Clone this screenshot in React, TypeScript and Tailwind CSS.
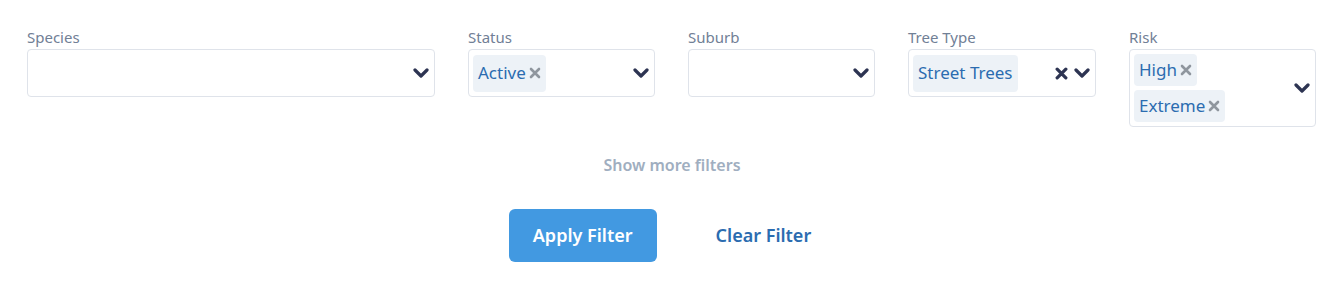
import React from "react";

const Chevron = () => (
  <svg width="16" height="12" viewBox="0 0 16 12" className="shrink-0">
    <polyline points="2,3 8,9 14,3" fill="none" stroke="#2d3452" strokeWidth="3.2" strokeLinecap="round" strokeLinejoin="round" />
  </svg>
);

const XIcon = ({ color = "#8f969e", size = 12, sw = 2.6 }: { color?: string; size?: number; sw?: number }) => (
  <svg width={size} height={size} viewBox="0 0 12 12" className="shrink-0">
    <path d="M2 2 L10 10 M10 2 L2 10" stroke={color} strokeWidth={sw} strokeLinecap="round" />
  </svg>
);

const Chip = ({ text, removable = true, h = "h-[37px]" }: { text: string; removable?: boolean; h?: string }) => (
  <div className={`flex items-center ${h} rounded-[4px] bg-[#edf2f7] pl-[5px] pr-[5px] text-[17px] text-[#2b6cb0]`}>
    <span>{text}</span>
    {removable && (
      <span className="ml-[3px] flex items-center">
        <XIcon />
      </span>
    )}
  </div>
);

const Field = ({ label, children, minH = "min-h-[48px]" }: { label: string; children?: React.ReactNode; minH?: string }) => (
  <div className="flex flex-col">
    <div className="mb-[2px] h-[20px] text-[15px] leading-[20px] text-[#718096]">{label}</div>
    <div className={`flex ${minH} items-center rounded-[4px] border border-[#dfe3ea] bg-white pr-[5px]`}>{children}</div>
  </div>
);

export default function App() {
  return (
    <div className="w-[1344px] h-[289px] bg-white px-[27px] pt-[27px]" style={{ fontFamily: '"Noto Sans", "Open Sans", sans-serif' }}>
      <div className="grid grid-cols-[408px_187px_187px_188px_187px] gap-x-[33px] items-start">
        <Field label="Species">
          <div className="flex-1" />
          <Chevron />
        </Field>
        <Field label="Status">
          <div className="flex flex-1 items-center pl-[4px]">
            <Chip text="Active" />
          </div>
          <Chevron />
        </Field>
        <Field label="Suburb">
          <div className="flex-1" />
          <Chevron />
        </Field>
        <Field label="Tree Type">
          <div className="flex flex-1 items-center pl-[4px]">
            <Chip text="Street Trees" removable={false} />
          </div>
          <div className="mr-[6px] flex items-center">
            <XIcon color="#2d3452" size={13} sw={3} />
          </div>
          <Chevron />
        </Field>
        <Field label="Risk" minH="min-h-[78px]">
          <div className="flex flex-1 flex-col items-start gap-[4px] py-[4px] pl-[4px]">
            <Chip text="High" h="h-[32px]" />
            <Chip text="Extreme" h="h-[32px]" />
          </div>
          <Chevron />
        </Field>
      </div>
      <div className="mt-[26px] text-center text-[16px] font-semibold leading-[24px] text-[#a0aec0]">Show more filters</div>
      <div className="mt-[32px] flex justify-center gap-[35px]">
        <button className="h-[53px] rounded-[6px] bg-[#4299e1] px-[24px] text-[18px] font-semibold text-white">Apply Filter</button>
        <button className="h-[53px] rounded-[6px] px-[24px] text-[18px] font-semibold text-[#2b6cb0]">Clear Filter</button>
      </div>
    </div>
  );
}
